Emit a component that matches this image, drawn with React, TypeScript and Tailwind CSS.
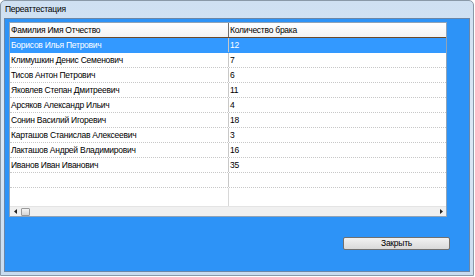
import React from "react";

const rows: [string, string][] = [
  ["Борисов Илья Петрович", "12"],
  ["Климушкин Денис Семенович", "7"],
  ["Тисов Антон Петрович", "6"],
  ["Яковлев Степан Дмитреевич", "11"],
  ["Арсяков Александр Ильич", "4"],
  ["Сонин Василий Игоревич", "18"],
  ["Карташов Станислав Алексеевич", "3"],
  ["Лакташов Андрей Владимирович", "16"],
  ["Иванов Иван Иванович", "35"],
  ["", ""],
];

export default function App() {
  return (
    <div
      className="w-[475px] h-[277px] bg-white relative overflow-hidden tracking-[-0.25px]"
      style={{ fontFamily: "'Liberation Sans', Arial, sans-serif" }}
    >
      <div className="absolute left-0 top-0 w-[474px] h-[276px] border border-[#8a99a8] rounded-t-[5px] bg-gradient-to-b from-[#cfe0f2] via-[#dae8f6] to-[#c9dcf0] flex flex-col">
        <div className="h-[17px] pl-[4px] pt-[2px] text-[8.5px] leading-[12px] text-black">
          Переаттестация
        </div>
        <div className="flex-1 mx-[3px] mb-[3px] border border-[#6a86a8] bg-[#2d93f7] flex flex-col">
          <div className="mt-[3px] ml-[4px] w-[438px] h-[195px] bg-white border border-[#8fa3b8] flex flex-col text-[8.5px] text-black">
            <div className="flex h-[15px] border-b border-[#6b4a2a] bg-gradient-to-b from-white to-[#f3f3f3]">
              <div className="w-[219px] pl-[1px] leading-[14px] border-r border-[#6e6e6e]">
                Фамилия Имя Отчество
              </div>
              <div className="flex-1 pl-[1px] leading-[14px]">Количество брака</div>
            </div>
            {rows.map((r, i) => (
              <div
                key={i}
                className={
                  "flex h-[15px] border-b border-dotted " +
                  (i === 0 ? "bg-[#3399ff] text-white border-[#3399ff]" : "border-[#c8c8c8]")
                }
              >
                <div className="w-[219px] pl-[1px] leading-[14px] border-r border-[#c8c8c8]">{r[0]}</div>
                <div className="flex-1 pl-[1px] leading-[14px]">{r[1]}</div>
              </div>
            ))}
            <div className="flex-1 flex">
              <div className="w-[219px] border-r border-[#d8d8d8]" />
            </div>
            <div className="h-[10px] bg-[#f0f0f0] border-t border-[#e4e4e4] flex items-center">
              <div className="w-[11px] flex items-center justify-center">
                <svg width="4" height="5" viewBox="0 0 4 5">
                  <path d="M3 0 L0 2.5 L3 5 Z" fill="#222" />
                </svg>
              </div>
              <div className="w-[9px] h-[8px] rounded-[1px] border border-[#9a9a9a] bg-gradient-to-b from-[#f4f4f4] to-[#d6d6d6]" />
              <div className="flex-1" />
              <div className="w-[11px] flex items-center justify-center">
                <svg width="4" height="5" viewBox="0 0 4 5">
                  <path d="M1 0 L4 2.5 L1 5 Z" fill="#222" />
                </svg>
              </div>
            </div>
          </div>
          <div className="flex justify-end pr-[19px] mt-[20px]">
            <div className="w-[107px] h-[13px] border border-[#707070] rounded-[2px] bg-gradient-to-b from-[#f2f2f2] to-[#d9d9d9] text-[8.5px] leading-[11px] text-center text-black">
              Закрыть
            </div>
          </div>
        </div>
      </div>
    </div>
  );
}
